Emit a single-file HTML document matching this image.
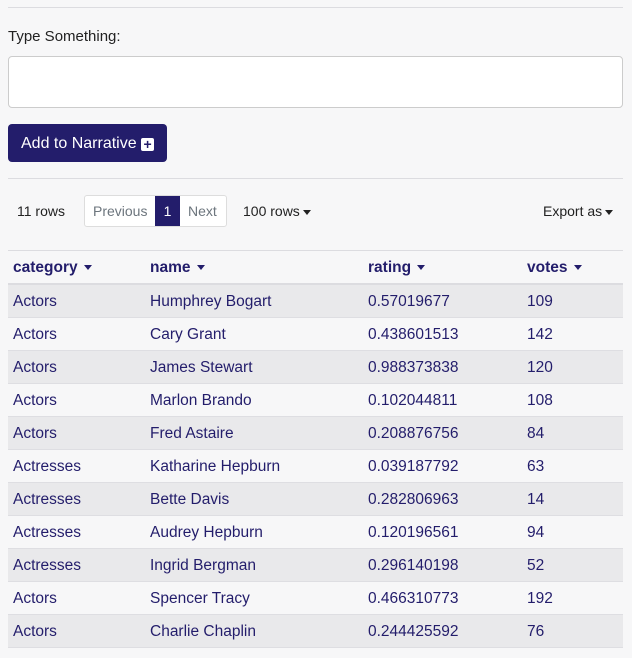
<!DOCTYPE html><html><head><style>
body{margin:0;background:#f7f7f8;font-family:"Liberation Sans",sans-serif;width:632px;height:658px;overflow:hidden;position:relative;color:#222}
.a{position:absolute}
.hr{position:absolute;left:8px;width:615px;height:1px;background:#dcdce0}
.car{display:inline-block;width:0;height:0;border-left:4px solid transparent;border-right:4px solid transparent;border-top:5px solid currentColor;vertical-align:middle;margin-left:6px}
table{position:absolute;left:8px;top:252px;width:615px;border-collapse:collapse;font-size:15.5px;color:#231d6b}
td,th{padding:1px 5px 0;height:31px;text-align:left;border-bottom:1px solid #dedee2}
th{font-weight:bold;height:30px;border-bottom:2px solid #dcdce0}
tr.o td{background:#e9e9eb}
</style></head><body>
<div class="hr" style="top:7px"></div>
<div class="a" style="left:8px;top:28px;font-size:15px">Type Something:</div>
<div class="a" style="left:8px;top:56px;width:613px;height:50px;border:1px solid #ccc;border-radius:4px;background:#fff"></div>
<div class="a" style="left:8px;top:124px;width:159px;height:38px;background:#231d6b;border-radius:4px;color:#fff;font-size:16px;line-height:39px;text-indent:13px">Add to Narrative <span style="display:inline-block;width:13px;height:13px;background:#fff;border-radius:2px;color:#231d6b;font-weight:bold;text-indent:0;text-align:center;line-height:13px;font-size:14px;vertical-align:-1px">+</span></div>
<div class="hr" style="top:178px"></div>
<div class="a" style="left:17px;top:203px;font-size:14px">11 rows</div>
<div class="a" style="left:84px;top:195px;width:141px;height:30px;border:1px solid #ddd;border-radius:3px;background:#fff;font-size:14px;line-height:30px;color:#6c757d">
<span class="a" style="left:8px">Previous</span>
<span class="a" style="left:70px;width:25px;height:30px;background:#231d6b;color:#fff;text-align:center">1</span>
<span class="a" style="left:103px">Next</span></div>
<div class="a" style="left:243px;top:203px;font-size:14px">100 rows<span class="car" style="margin-left:3px"></span></div>
<div class="a" style="left:543px;top:203px;font-size:14px">Export as<span class="car" style="margin-left:3px"></span></div>
<div class="hr" style="top:250px"></div>
<table>
<colgroup><col style="width:137px"><col style="width:218px"><col style="width:159px"><col></colgroup>
<tr><th>category<span class="car"></span></th><th>name<span class="car"></span></th><th>rating<span class="car"></span></th><th>votes<span class="car"></span></th></tr>
<tr class="o"><td>Actors</td><td>Humphrey Bogart</td><td>0.57019677</td><td>109</td></tr>
<tr><td>Actors</td><td>Cary Grant</td><td>0.438601513</td><td>142</td></tr>
<tr class="o"><td>Actors</td><td>James Stewart</td><td>0.988373838</td><td>120</td></tr>
<tr><td>Actors</td><td>Marlon Brando</td><td>0.102044811</td><td>108</td></tr>
<tr class="o"><td>Actors</td><td>Fred Astaire</td><td>0.208876756</td><td>84</td></tr>
<tr><td>Actresses</td><td>Katharine Hepburn</td><td>0.039187792</td><td>63</td></tr>
<tr class="o"><td>Actresses</td><td>Bette Davis</td><td>0.282806963</td><td>14</td></tr>
<tr><td>Actresses</td><td>Audrey Hepburn</td><td>0.120196561</td><td>94</td></tr>
<tr class="o"><td>Actresses</td><td>Ingrid Bergman</td><td>0.296140198</td><td>52</td></tr>
<tr><td>Actors</td><td>Spencer Tracy</td><td>0.466310773</td><td>192</td></tr>
<tr class="o"><td>Actors</td><td>Charlie Chaplin</td><td>0.244425592</td><td>76</td></tr>
</table>
</body></html>
